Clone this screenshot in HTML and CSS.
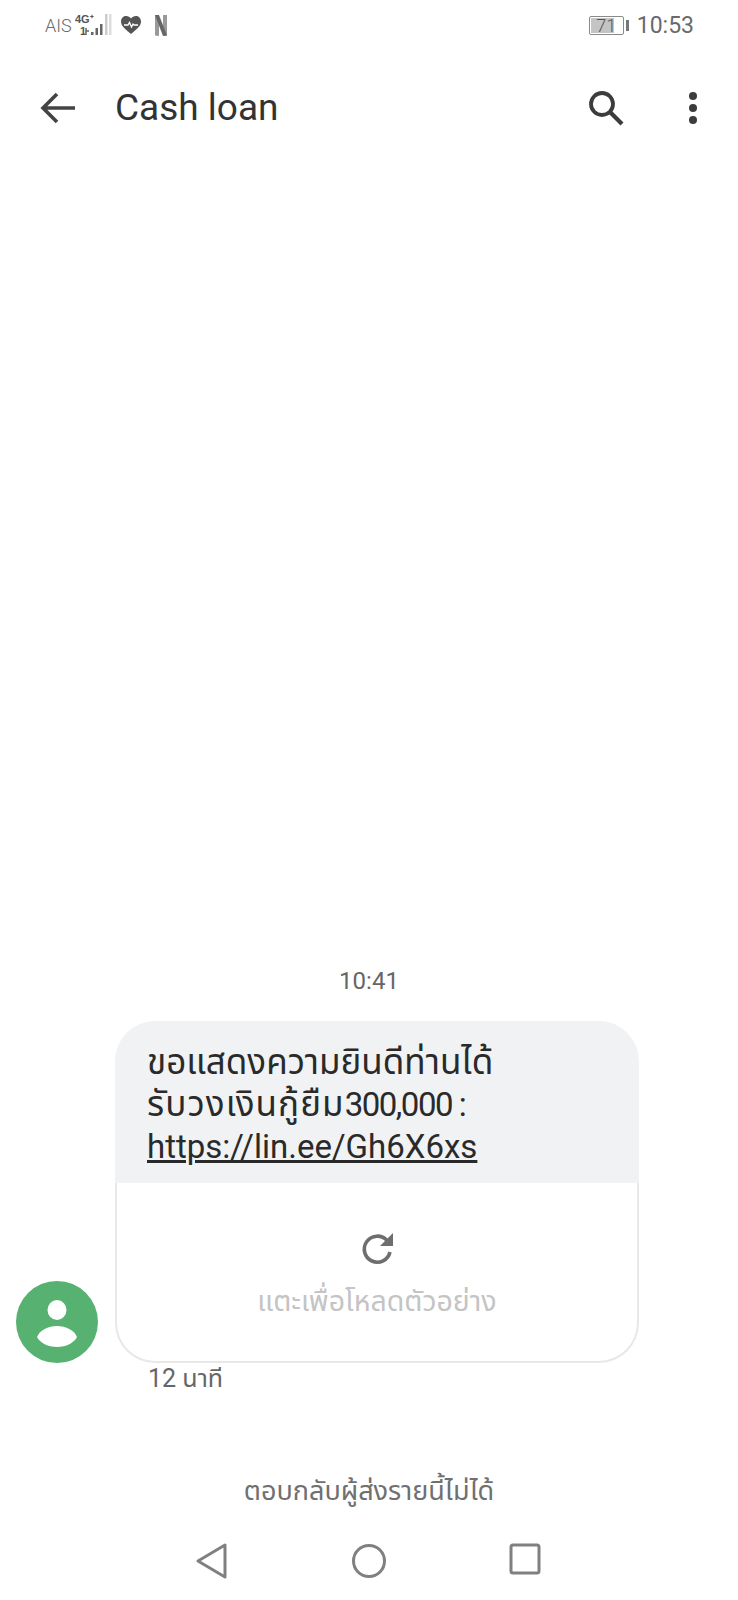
FILE: index.html
```html
<!DOCTYPE html>
<html lang="th">
<head>
<meta charset="UTF-8">
<meta name="viewport" content="width=device-width, initial-scale=1.0">
<title>Cash loan</title>
<link rel="stylesheet" href="styles.css">
</head>
<body>

  <div class="screen">
    <div class="status-bar">
      <div class="status-left">
        <span class="carrier">AIS</span>
        <svg class="signal" width="40" height="24" viewBox="0 0 40 24">
          <text x="0" y="10" class="signal-text">4G⁺</text>
          <text x="5" y="22" class="signal-text">1</text>
          <path d="M11 15 V22 M11 18 L14 18" fill="none" stroke="#666" stroke-width="1.500"/>
          <rect x="16" y="19" width="2.500" height="3" fill="#666"/>
          <rect x="20.500" y="15" width="2.500" height="7" fill="#666"/>
          <rect x="25" y="11" width="2.500" height="11" fill="#666"/>
          <rect x="30" y="1" width="2.500" height="21" fill="#ccc"/>
          <rect x="34" y="1" width="2.500" height="21" fill="#ddd"/>
        </svg>
        <svg class="heart" width="22" height="20" viewBox="0 0 22 20">
          <path d="M11 19 C5 14 1 11 1 6.500 C1 3 3.500 1 6.200 1 C8 1 10 2 11 3.500 C12 2 14 1 15.800 1 C18.500 1 21 3 21 6.500 C21 11 17 14 11 19 Z" fill="#555"/>
          <path d="M4 10 H8 L9.500 7.500 L11.500 12 L13 9 L14 10 H18" fill="none" stroke="#fff" stroke-width="1.300"/>
        </svg>
        <svg class="netflix" width="12" height="21" viewBox="0 0 12 21">
          <path d="M0 0 H4 V21 L0 20.500 Z" fill="#999"/>
          <path d="M8 0 H12 V20.500 L8 21 Z" fill="#999"/>
          <path d="M0 0 H4 L12 20.500 L8 21 Z" fill="#666"/>
        </svg>
      </div>
      <div class="status-right">
        <div class="battery">
          <div class="battery-body">
            <div class="battery-fill" style="width: 75%"></div>
            <span class="battery-num">71</span>
          </div>
          <div class="battery-tip"></div>
        </div>
        <span class="clock">10:53</span>
      </div>
    </div>

    <div class="app-bar">
      <svg class="back" width="36" height="32" viewBox="0 0 36 32">
        <path d="M35 16 H4 M17 2 L3 16 L17 30" fill="none" stroke="#444" stroke-width="3.600"/>
      </svg>
      <h1 class="title">Cash loan</h1>
      <svg class="search" width="36" height="36" viewBox="0 0 36 36">
        <circle cx="14" cy="14" r="11" fill="none" stroke="#3c3c3c" stroke-width="3.800"/>
        <path d="M22 22 L34 34" fill="none" stroke="#3c3c3c" stroke-width="4.200"/>
      </svg>
      <div class="more">
        <span class="dot"></span>
        <span class="dot"></span>
        <span class="dot"></span>
      </div>
    </div>

    <div class="conversation">
      <div class="time-label">10:41</div>
      <div class="message-row">
        <div class="avatar">
          <svg width="82" height="82" viewBox="0 0 82 82">
            <ellipse cx="41" cy="29" rx="9.500" ry="10" fill="#fff"/>
            <path d="M21 56 C24 49 32 45 41 45 C50 45 58 49 61 56 C58 62 50 66 41 66 C32 66 24 62 21 56 Z" fill="#fff"/>
          </svg>
        </div>
        <div class="bubble">
          <div class="bubble-text">
            <p class="thai">ขอแสดงความยินดีท่านได้</p>
            <p><span class="thai wide">รับวงเงินกู้ยืม</span><span class="narrow">300,000 :</span></p>
            <p><a href="#">https://lin.ee/Gh6X6xs</a></p>
          </div>
          <div class="preview">
            <svg class="reload" width="34" height="34" viewBox="0 0 34 34">
              <path d="M27 8.500 A13 13 0 1 0 30 20" fill="none" stroke="#6e6e6e" stroke-width="3.600"/>
              <path d="M33 1 V14 H20 Z" fill="#6e6e6e"/>
            </svg>
            <div class="preview-text">แตะเพื่อโหลดตัวอย่าง</div>
          </div>
        </div>
      </div>
      <div class="sent-time">12 นาที</div>
    </div>

    <div class="no-reply">ตอบกลับผู้ส่งรายนี้ไม่ได้</div>

    <div class="nav-bar">
      <svg width="34" height="36" viewBox="0 0 34 36">
        <path d="M30 2 V34 L3 18 Z" fill="none" stroke="#808080" stroke-width="3" stroke-linejoin="round"/>
      </svg>
      <svg width="36" height="36" viewBox="0 0 36 36">
        <circle cx="18" cy="18" r="15.500" fill="none" stroke="#808080" stroke-width="3"/>
      </svg>
      <svg width="32" height="32" viewBox="0 0 32 32">
        <rect x="2" y="2" width="28" height="28" rx="2" fill="none" stroke="#808080" stroke-width="3"/>
      </svg>
    </div>
  </div>

</body>
</html>
```

FILE: styles.css
```css
* {
  box-sizing: border-box;
}

body {
  margin: 0;
  background-color: #fff;
  font-family: Roboto, "Noto Sans", "Noto Sans Thai", sans-serif;
}

.screen {
  width: 738px;
  height: 1600px;
  display: flex;
  flex-direction: column;
  overflow: hidden;
}

.status-bar {
  height: 50px;
  padding: 0 44px 0 45px;
  display: flex;
  justify-content: space-between;
  align-items: center;
  color: #6a6a6a;
}

.status-left {
  display: flex;
  align-items: center;
}

.status-right {
  display: flex;
  align-items: center;
  gap: 8px;
}

.carrier {
  font-size: 18px;
  font-weight: 300;
  margin-right: 3px;
}

.signal-text {
  font-family: "Liberation Sans", sans-serif;
  font-size: 11px;
  font-weight: bold;
  fill: #555;
}

.heart {
  margin-left: 5px;
}

.netflix {
  margin-left: 13px;
}

.battery {
  display: flex;
  align-items: center;
  gap: 2px;
}

.battery-body {
  position: relative;
  width: 35px;
  height: 19px;
  border: 1px solid #8a8a8a;
  border-radius: 2px;
  padding: 1px;
}

.battery-fill {
  height: 100%;
  background-color: #c4c4c4;
}

.battery-num {
  position: absolute;
  left: 0;
  right: 0;
  top: 0;
  text-align: center;
  font-size: 18px;
  font-weight: 300;
  line-height: 17px;
  color: #555;
}

.battery-tip {
  width: 3px;
  height: 11px;
  background-color: #777;
}

.clock {
  font-size: 23px;
}

.app-bar {
  height: 108px;
  padding: 7px 41px 0 40px;
  display: flex;
  align-items: center;
}

.title {
  flex: 1;
  margin: 0 0 0 39px;
  font-size: 37px;
  font-weight: 400;
  color: #333;
}

.search {
  margin-right: 65px;
}

.more {
  display: flex;
  flex-direction: column;
  gap: 4px;
}

.dot {
  width: 8px;
  height: 8px;
  border-radius: 50%;
  background-color: #3c3c3c;
}

.conversation {
  flex: 1;
  display: flex;
  flex-direction: column;
  justify-content: flex-end;
}

.time-label {
  text-align: center;
  font-size: 24px;
  color: #666;
  margin-bottom: 26px;
}

.message-row {
  display: flex;
  align-items: flex-end;
  padding-left: 16px;
}

.avatar {
  width: 82px;
  height: 82px;
  border-radius: 50%;
  background-color: #57b271;
  margin-right: 17px;
}

.avatar svg {
  display: block;
}

.bubble {
  width: 524px;
}

.bubble-text {
  height: 162px;
  padding: 21px 32px 0;
  background-color: #f1f2f4;
  border-radius: 40px 40px 0 0;
  font-size: 33px;
  line-height: 42px;
  color: #2a2a2a;
}

.bubble-text p {
  margin: 0;
}

.bubble-text .thai {
  font-size: 35px;
}

.bubble-text .wide {
  letter-spacing: 1.100px;
}

.bubble-text .narrow {
  letter-spacing: -1.500px;
}

.bubble-text a {
  color: #2a2a2a;
}

.preview {
  height: 180px;
  border: 2px solid #e8e8e8;
  border-top: none;
  border-radius: 0 0 40px 40px;
  display: flex;
  flex-direction: column;
  align-items: center;
  padding-top: 49px;
}

.reload {
  margin-bottom: 15px;
}

.preview-text {
  font-size: 28.500px;
  color: #c4c4c4;
}

.sent-time {
  padding-left: 148px;
  margin-top: 5px;
  font-size: 25px;
  line-height: 22px;
  color: #666;
}

.no-reply {
  margin-top: 81px;
  text-align: center;
  font-size: 27px;
  color: #707070;
}

.nav-bar {
  height: 88px;
  padding: 31px 0 0 195px;
  display: flex;
  align-items: flex-start;
  gap: 122px;
}
```
